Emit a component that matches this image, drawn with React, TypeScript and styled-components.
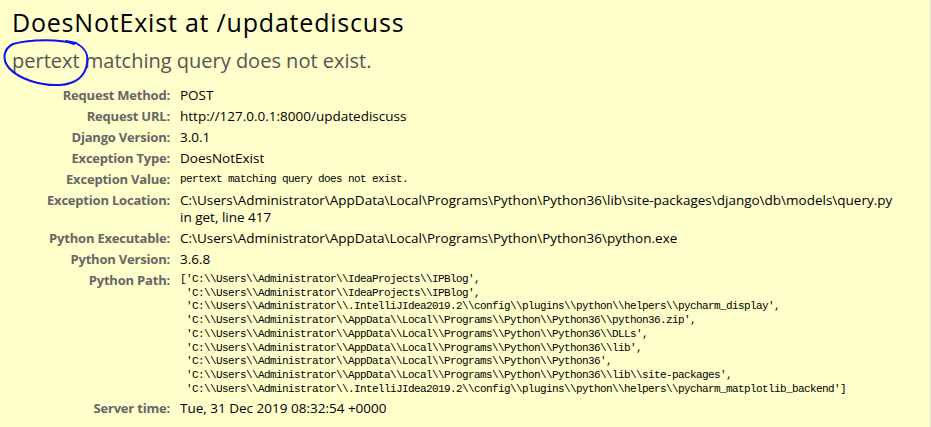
import React from 'react';
import styled, { createGlobalStyle } from 'styled-components';

const GlobalStyle = createGlobalStyle`
  html, body {
    margin: 0;
    padding: 0;
    background: #ffc;
  }
  body {
    font-family: 'Open Sans', 'Noto Sans CJK SC', sans-serif;
    color: #000;
  }
`;

type MetaRow = {
  label: string;
  value: string | string[];
  mono?: boolean;
  suffix?: string;
};

const pythonPath = [
  "['C:\\\\Users\\\\Administrator\\\\IdeaProjects\\\\IPBlog',",
  " 'C:\\\\Users\\\\Administrator\\\\IdeaProjects\\\\IPBlog',",
  " 'C:\\\\Users\\\\Administrator\\\\.IntelliJIdea2019.2\\\\config\\\\plugins\\\\python\\\\helpers\\\\pycharm_display',",
  " 'C:\\\\Users\\\\Administrator\\\\AppData\\\\Local\\\\Programs\\\\Python\\\\Python36\\\\python36.zip',",
  " 'C:\\\\Users\\\\Administrator\\\\AppData\\\\Local\\\\Programs\\\\Python\\\\Python36\\\\DLLs',",
  " 'C:\\\\Users\\\\Administrator\\\\AppData\\\\Local\\\\Programs\\\\Python\\\\Python36\\\\lib',",
  " 'C:\\\\Users\\\\Administrator\\\\AppData\\\\Local\\\\Programs\\\\Python\\\\Python36',",
  " 'C:\\\\Users\\\\Administrator\\\\AppData\\\\Local\\\\Programs\\\\Python\\\\Python36\\\\lib\\\\site-packages',",
  " 'C:\\\\Users\\\\Administrator\\\\.IntelliJIdea2019.2\\\\config\\\\plugins\\\\python\\\\helpers\\\\pycharm_matplotlib_backend']",
];

const rows: MetaRow[] = [
  { label: 'Request Method:', value: 'POST' },
  { label: 'Request URL:', value: 'http://127.0.0.1:8000/updatediscuss' },
  { label: 'Django Version:', value: '3.0.1' },
  { label: 'Exception Type:', value: 'DoesNotExist' },
  { label: 'Exception Value:', value: 'pertext matching query does not exist.', mono: true },
  {
    label: 'Exception Location:',
    value:
      'C:\\Users\\Administrator\\AppData\\Local\\Programs\\Python\\Python36\\lib\\site-packages\\django\\db\\models\\query.py',
    suffix: ' in get, line 417',
  },
  {
    label: 'Python Executable:',
    value: 'C:\\Users\\Administrator\\AppData\\Local\\Programs\\Python\\Python36\\python.exe',
  },
  { label: 'Python Version:', value: '3.6.8' },
  { label: 'Python Path:', value: pythonPath, mono: true },
  { label: 'Server time:', value: 'Tue, 31 Dec 2019 08:32:54 +0000' },
];

// 手描きの丸 (スクショに書き込まれた注釈)
const Scribble = () => (
  <ScribbleSvg width='100' height='95' viewBox='0 0 100 95'>
    <path
      d='M74 44 C62 39, 30 39, 13 44 C3 49, 2 60, 9 68 C19 79, 40 86, 60 85 C76 84, 85 76, 87 64 C89 54, 85 48, 76 43 L66 41'
      fill='none'
      stroke='#1010f0'
      strokeWidth='2'
      strokeLinecap='round'
    />
  </ScribbleSvg>
);

const App = () => {
  return (
    <Page>
      <GlobalStyle />
      <Summary>
        <Title>DoesNotExist at /updatediscuss</Title>
        <Subtitle>pertext matching query does not exist.</Subtitle>
        <Meta>
          {rows.map((row) => (
            <React.Fragment key={row.label}>
              <Label>{row.label}</Label>
              {Array.isArray(row.value) ? (
                <Pre>{row.value.join('\n')}</Pre>
              ) : (
                <Value mono={row.mono}>
                  <NoWrap>{row.value}</NoWrap>
                  {row.suffix}
                </Value>
              )}
            </React.Fragment>
          ))}
        </Meta>
      </Summary>
      <Scribble />
    </Page>
  );
};

export default App;

const Page = styled.div`
  position: relative;
  width: 930px;
  height: 427px;
  border-right: 1px solid #e2e2d0;
  overflow: hidden;
`;

const Summary = styled.div`
  padding: 7px 20px 0 12px;
`;

const Title = styled.h1`
  margin: 0;
  font-size: 25px;
  font-weight: normal;
  line-height: 30px;
  letter-spacing: 0.8px;
`;

const Subtitle = styled.h2`
  margin: 11px 0 0;
  font-size: 20px;
  font-weight: normal;
  line-height: 26px;
  color: #555;
`;

const Meta = styled.div`
  display: grid;
  grid-template-columns: 158px 1fr;
  column-gap: 10px;
  margin-top: 11px;
`;

const Label = styled.div`
  padding: 2px 0;
  text-align: right;
  font-size: 13px;
  line-height: 17px;
  font-weight: bold;
  color: #666;
  letter-spacing: -0.2px;
`;

const Value = styled.div<{ mono?: boolean }>`
  padding: 2px 18px 2px 0;
  font-size: ${({ mono }) => (mono ? '11px' : '13.5px')};
  line-height: 17px;
  letter-spacing: ${({ mono }) => (mono ? '-0.6px' : '0')};
  font-family: ${({ mono }) =>
    mono ? "'Liberation Mono', monospace" : "'Open Sans', 'Noto Sans CJK SC', sans-serif"};
`;

const NoWrap = styled.span`
  white-space: nowrap;
`;

const Pre = styled.pre`
  margin: 0;
  padding: 3px 0 2px;
  font-family: 'Liberation Mono', monospace;
  font-size: 11px;
  line-height: 13.7px;
  letter-spacing: -0.6px;
  white-space: pre;
`;

const ScribbleSvg = styled.svg`
  position: absolute;
  left: 0;
  top: 0;
  pointer-events: none;
`;
